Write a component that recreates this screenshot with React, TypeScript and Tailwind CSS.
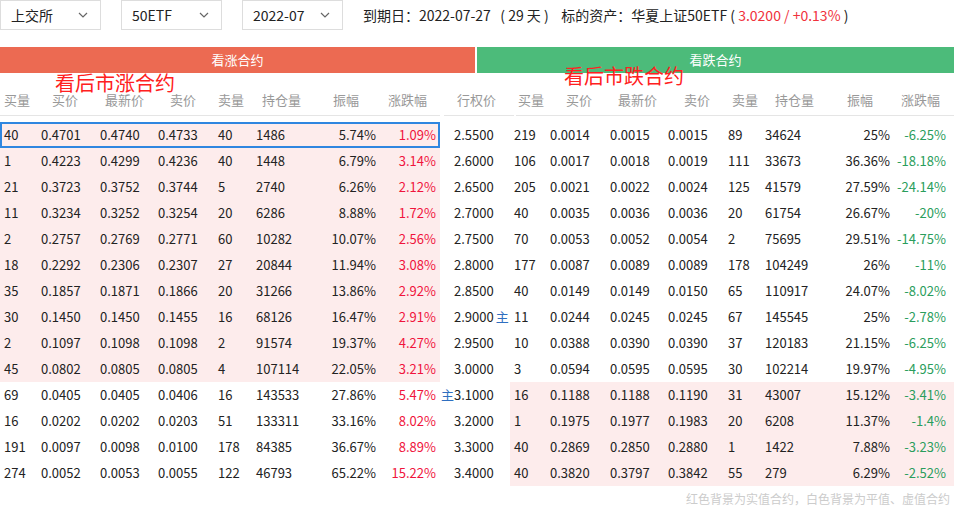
import React from "react";

const L = [
["40","0.4701","0.4740","0.4733","40","1486","5.74%","1.09%","2.5500","219","0.0014","0.0015","0.0015","89","34624","25%","-6.25%"],
["1","0.4223","0.4299","0.4236","40","1448","6.79%","3.14%","2.6000","106","0.0017","0.0018","0.0019","111","33673","36.36%","-18.18%"],
["21","0.3723","0.3752","0.3744","5","2740","6.26%","2.12%","2.6500","205","0.0021","0.0022","0.0024","125","41579","27.59%","-24.14%"],
["11","0.3234","0.3252","0.3254","20","6286","8.88%","1.72%","2.7000","40","0.0035","0.0036","0.0036","20","61754","26.67%","-20%"],
["2","0.2757","0.2769","0.2771","60","10282","10.07%","2.56%","2.7500","70","0.0053","0.0052","0.0054","2","75695","29.51%","-14.75%"],
["18","0.2292","0.2306","0.2307","27","20844","11.94%","3.08%","2.8000","177","0.0087","0.0089","0.0089","178","104249","26%","-11%"],
["35","0.1857","0.1871","0.1866","20","31266","13.86%","2.92%","2.8500","40","0.0149","0.0149","0.0150","65","110917","24.07%","-8.02%"],
["30","0.1450","0.1450","0.1455","16","68126","16.47%","2.91%","2.9000","11","0.0244","0.0245","0.0245","67","145545","25%","-2.78%"],
["2","0.1097","0.1098","0.1098","2","91574","19.37%","4.27%","2.9500","10","0.0388","0.0390","0.0390","37","120183","21.15%","-6.25%"],
["45","0.0802","0.0805","0.0805","4","107114","22.05%","3.21%","3.0000","3","0.0594","0.0595","0.0595","30","102214","19.97%","-4.95%"],
["69","0.0405","0.0405","0.0406","16","143533","27.86%","5.47%","3.1000","16","0.1188","0.1188","0.1190","31","43007","15.12%","-3.41%"],
["16","0.0202","0.0202","0.0203","51","133311","33.16%","8.02%","3.2000","1","0.1975","0.1977","0.1983","20","6208","11.37%","-1.4%"],
["191","0.0097","0.0098","0.0100","178","84385","36.67%","8.89%","3.3000","40","0.2869","0.2850","0.2880","1","1422","7.88%","-3.23%"],
["274","0.0052","0.0053","0.0055","122","46793","65.22%","15.22%","3.4000","40","0.3820","0.3797","0.3842","55","279","6.29%","-2.52%"],
];

const lw = ["w-[37px]","w-[59px]","w-[58px]","w-[60px]","w-[38px]","w-[64px]","w-[62px] text-right pr-[2px]","w-[62px] text-right pr-[4px]"];
const rw = ["w-[36px]","w-[60px]","w-[58px]","w-[60px]","w-[37px]","w-[69px]","w-[62px] text-right pr-[2px]","w-[62px] text-right pr-[8px]"];
const lh = ["w-[48px]","w-[53px]","w-[65px]","w-[48px]","w-[44px]","w-[71px]","w-[55px]","w-[52px]"];
const rh = ["w-[48px]","w-[52px]","w-[66px]","w-[48px]","w-[43px]","w-[72px]","w-[54px]","w-[52px]"];
const hdr = ["买量","买价","最新价","卖价","卖量","持仓量","振幅","涨跌幅"];

function Sel({ t, w }: { t: string; w: string }) {
  return (
    <div className={`${w} h-[30px] border border-[#ddd] flex items-center justify-between pl-[10px] pr-[12px] text-[14px]`}>
      <span>{t}</span>
      <svg width="10" height="6" viewBox="0 0 10 6"><path d="M1 1l4 4 4-4" stroke="#666" fill="none" strokeWidth="1.2" /></svg>
    </div>
  );
}

export default function App() {
  return (
    <div className="relative w-[954px] h-[515px] bg-white text-[#222] text-[13px] overflow-hidden" style={{ fontFamily: '"Noto Sans CJK SC", "Noto Sans", sans-serif' }}>
      <div className="flex items-center h-[30px] gap-[20px] text-[14px]">
        <Sel t="上交所" w="w-[101px]" />
        <Sel t="50ETF" w="w-[101px]" />
        <Sel t="2022-07" w="w-[101px]" />
        <div className="whitespace-pre">到期日：2022-07-27   ( 29 天 )    标的资产：华夏上证50ETF ( <span className="text-[#f0323c]">3.0200 / +0.13%</span> )</div>
      </div>
      <div className="flex mt-[17px] h-[26px] text-white text-[13px]">
        <div className="w-[475px] bg-[#ec6a52] flex items-center justify-center">看涨合约</div>
        <div className="w-[2px]" />
        <div className="flex-1 bg-[#4cbb7a] flex items-center justify-center">看跌合约</div>
      </div>
      <div className="flex h-[42px] items-end pb-[6px] text-[#999] text-[13px]">
        <div className="flex w-[440px] pl-[4px] border-b border-[#e5e5e5] pb-[6px] mb-[-7px]">
          {hdr.map((h, i) => <div key={i} className={`${lh[i]} shrink-0`}>{h}</div>)}
        </div>
        <div className="w-[70px] pl-[13px] border-b border-[#e5e5e5] pb-[6px] mb-[-7px] ml-[4px] mr-[2px]">行权价</div>
        <div className="flex flex-1 pl-[2px] border-b border-[#e5e5e5] pb-[6px] mb-[-7px]">
          {hdr.map((h, i) => <div key={i} className={`${rh[i]} shrink-0`}>{h}</div>)}
        </div>
      </div>
      <div className="mt-[7px] flex flex-col">
        {L.map((r, i) => (
          <div key={i} className="flex h-[26px] min-h-[26px] shrink-0 items-center">
            <div className={`relative flex w-[440px] h-full items-center ${i < 10 ? "bg-[#fdecec]" : ""} ${i === 0 ? "outline-2 outline-[#2f86e0] -outline-offset-2" : ""}`}>
              {r.slice(0, 8).map((c, j) => (
                <div key={j} className={`${lw[j]} pl-[4px] ${j === 7 ? "text-[#f0143c]" : ""}`}>{c}</div>
              ))}
            </div>
            <div className="w-[70px] pl-[14px] relative">
              {i === 10 && <span className="absolute left-[1px] text-[#2f6fc0]">主</span>}
              {r[8]}
              {i === 7 && <span className="text-[#2f6fc0] ml-[2px]">主</span>}
            </div>
            <div className={`flex flex-1 h-full items-center ${i >= 10 ? "bg-[#fdecec]" : ""}`}>
              {r.slice(9).map((c, j) => (
                <div key={j} className={`${rw[j]} pl-[4px] ${j === 7 ? "text-[#2a9d5c]" : ""}`}>{c}</div>
              ))}
            </div>
          </div>
        ))}
      </div>
      <div className="text-right text-[12px] text-[#ccc] pr-[4px] mt-[4px]">红色背景为实值合约，白色背景为平值、虚值合约</div>
      <div className="absolute left-[55px] top-[73px] text-[20px] text-[#ff2020] leading-none">看后市涨合约</div>
      <div className="absolute left-[564px] top-[66px] text-[20px] text-[#ff2020] leading-none">看后市跌合约</div>
    </div>
  );
}
